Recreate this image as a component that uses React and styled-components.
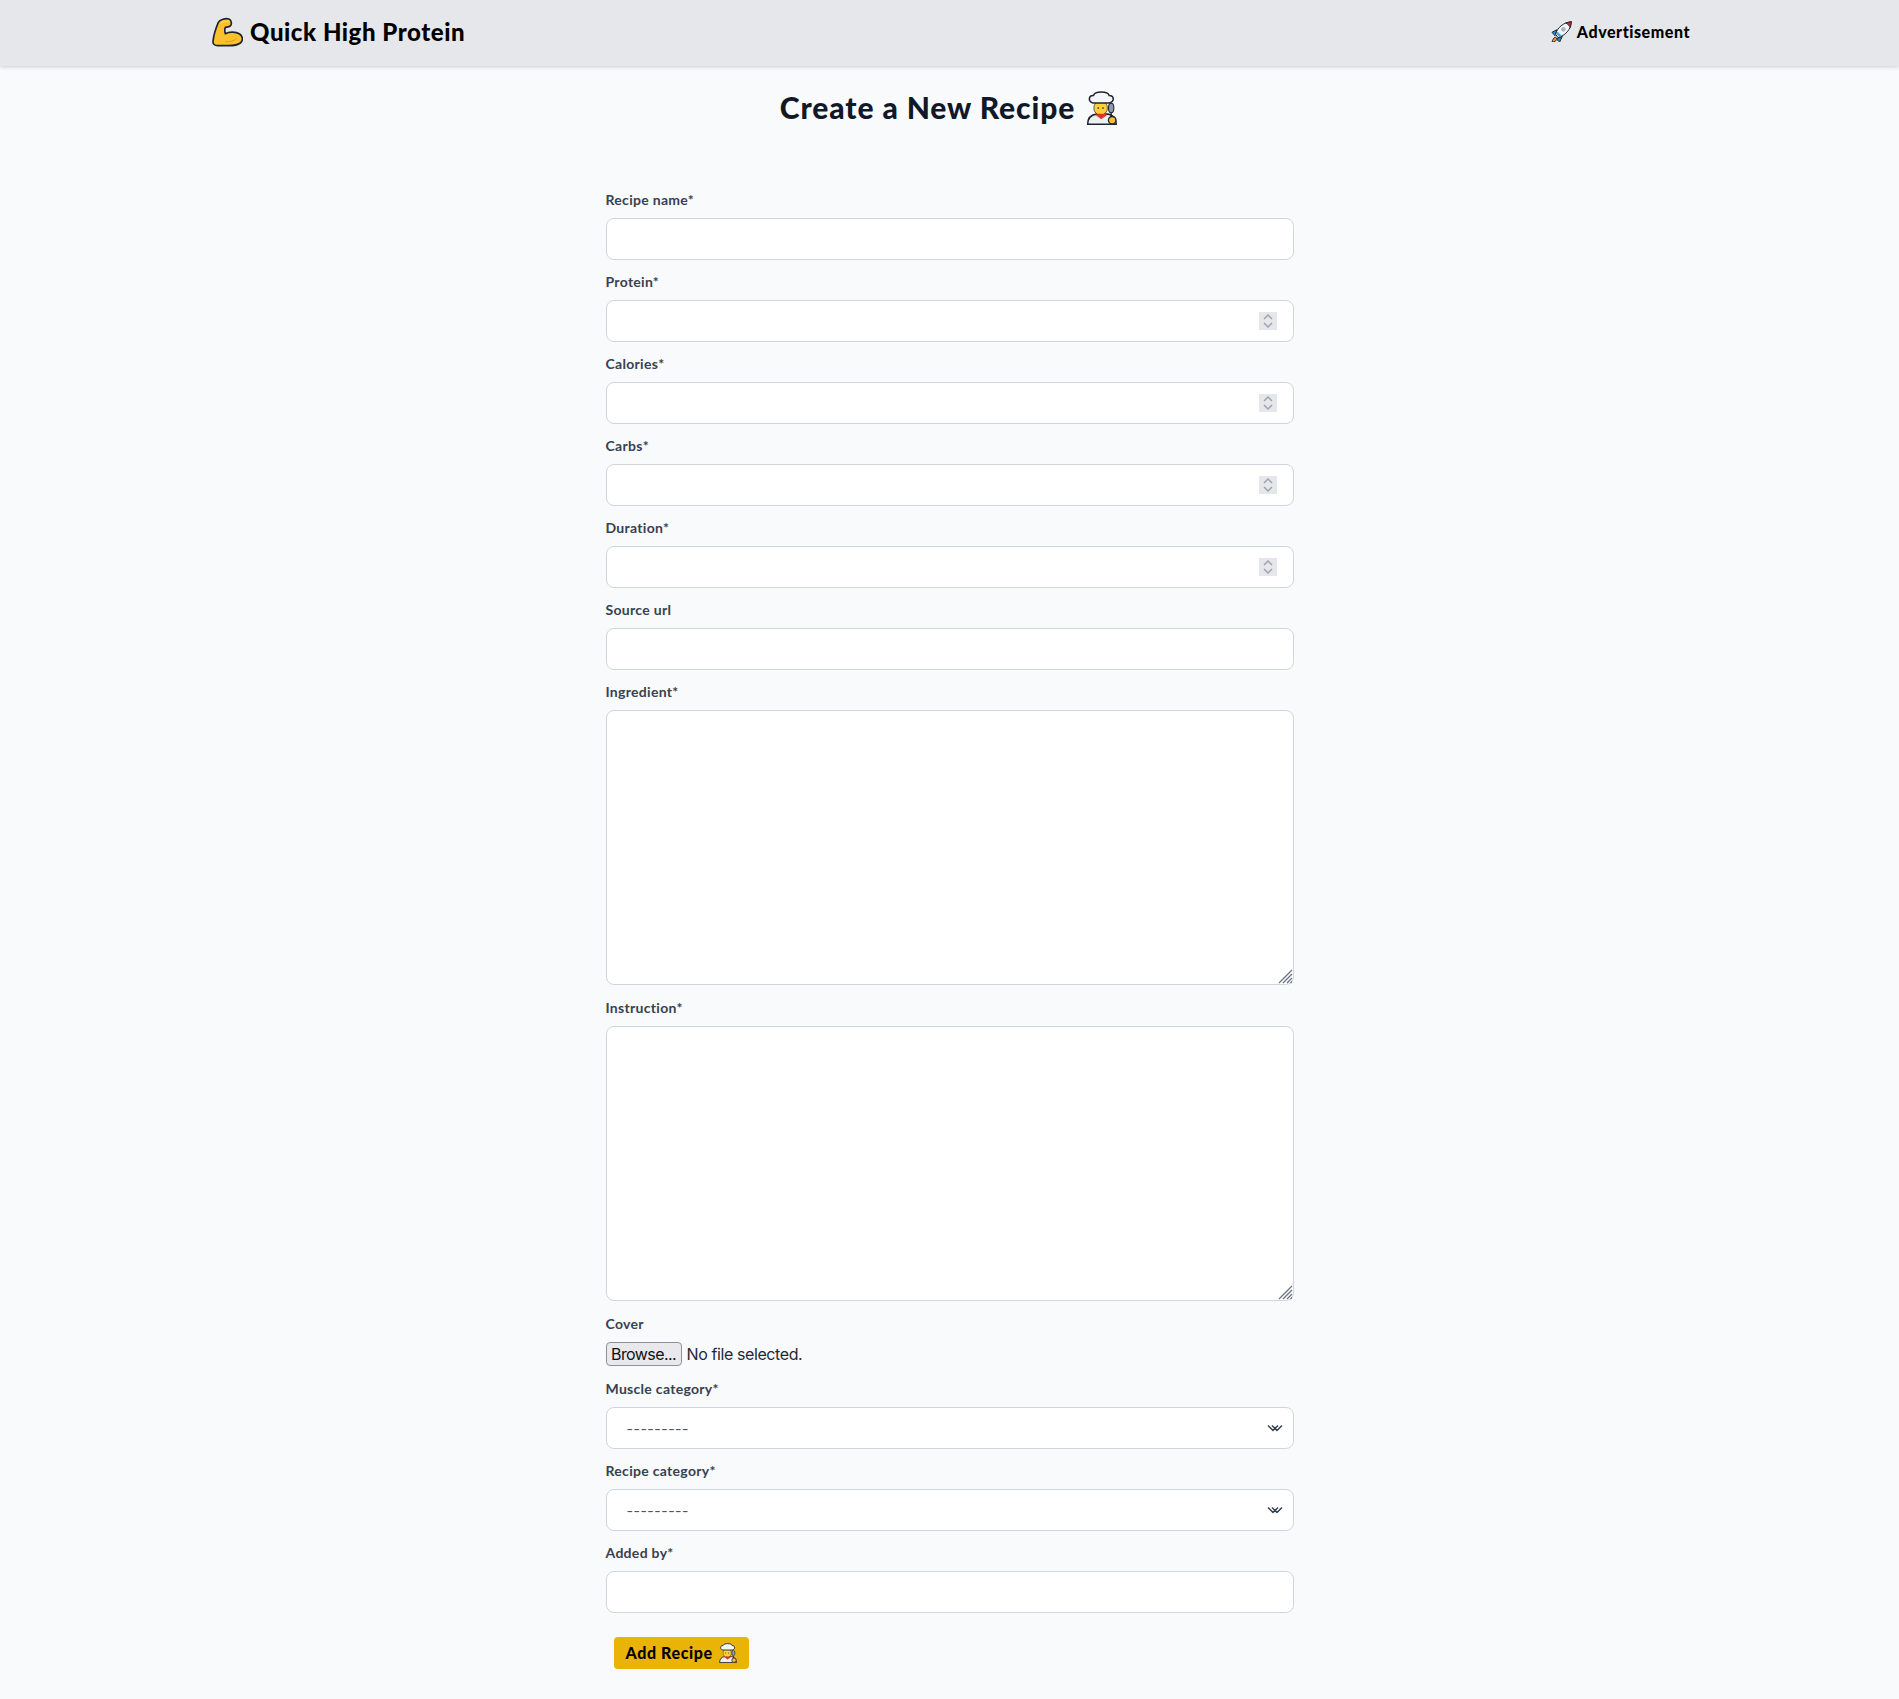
import styled, { createGlobalStyle } from 'styled-components';

const GlobalStyle = createGlobalStyle`
  * { box-sizing: border-box; }
  body {
    margin: 0;
    background: #f9fafb;
    font-family: "Lato", "Open Sans", sans-serif;
    color: #111827;
  }
`;

const Nav = styled.nav`
  height: 66px;
  background: #e5e7eb;
  box-shadow: 0 1px 4px rgba(0, 0, 0, 0.18);
  display: flex;
  align-items: center;
  justify-content: space-between;
  padding: 0 209px 3px 211px;
`;

const Brand = styled.a`
  display: flex;
  align-items: center;
  gap: 7px;
  font-size: 24px;
  font-weight: 900;
  letter-spacing: 0.55px;
  color: #000;
`;

const NavLink = styled.a`
  display: flex;
  align-items: center;
  gap: 5px;
  font-size: 16px;
  font-weight: 900;
  letter-spacing: 0.55px;
  color: #000;
`;

const Title = styled.h1`
  margin: 0;
  height: 124px;
  padding: 21px 0 63px;
  display: flex;
  justify-content: center;
  align-items: center;
  gap: 10px;
  font-size: 30px;
  line-height: 40px;
  font-weight: 900;
  letter-spacing: 0.9px;
  color: #111827;
`;

const TitleEmoji = styled.span`
  display: flex;
  align-self: flex-end;
  margin-bottom: 2px;
`;

const Form = styled.form`
  width: 688px;
  margin: 0 auto;
  padding-bottom: 32px;
`;

const Field = styled.div`
  margin-bottom: ${(p) => (p.$area ? '13px' : '12px')};
`;

const Label = styled.label`
  display: block;
  height: 24px;
  margin-bottom: 4px;
  font-size: 14px;
  line-height: 20px;
  font-weight: 700;
  letter-spacing: 0.3px;
  color: #374151;
`;

const Control = styled.div`
  position: relative;
`;

const Input = styled.input`
  display: block;
  width: 100%;
  height: 42px;
  background: #fff;
  border: 1px solid #d1d5db;
  border-radius: 8px;
  padding: 0 20px;
  font: inherit;
`;

const Textarea = styled.textarea`
  display: block;
  width: 100%;
  height: 275px;
  background: #fff;
  border: 1px solid #d1d5db;
  border-radius: 8px;
  padding: 10px 20px;
  font: inherit;
  resize: none;
`;

const Select = styled.select`
  display: block;
  width: 100%;
  height: 42px;
  appearance: none;
  background: #fff;
  border: 1px solid #d1d5db;
  border-radius: 8px;
  padding: 0 20px;
  font-family: "Inter", sans-serif;
  font-size: 14px;
  letter-spacing: 0.5px;
  color: #4b5563;
`;

const Spinner = styled.svg`
  position: absolute;
  top: 12px;
  right: 17px;
  width: 18px;
  height: 18px;
  background: #e5e7eb;
`;

const Grip = styled.svg`
  position: absolute;
  right: 1px;
  bottom: 1px;
  width: 15px;
  height: 15px;
`;

const Caret = styled.svg`
  position: absolute;
  top: 14px;
  right: 11px;
  width: 16px;
  height: 14px;
  pointer-events: none;
`;

const FileRow = styled.div`
  display: flex;
  align-items: center;
  gap: 5px;
  height: 24px;
  margin: 1px 0 13px;
  font-family: "Inter", sans-serif;
  font-size: 16px;
  letter-spacing: -0.4px;
  color: #1f2937;
`;

const BrowseButton = styled.button`
  width: 76px;
  height: 24px;
  padding: 0;
  background: #e9e9ed;
  border: 1px solid #8f8f9d;
  border-radius: 4px;
  font-family: "Inter", sans-serif;
  font-size: 16px;
  letter-spacing: -0.6px;
  color: #111;
`;

const Submit = styled.button`
  display: flex;
  align-items: center;
  gap: 5px;
  width: 135px;
  height: 32px;
  margin: 24px 0 0 8px;
  padding: 0 0 1px 12px;
  background: #eab308;
  border: 0;
  border-radius: 4px;
  font-family: "Lato", sans-serif;
  font-size: 16px;
  font-weight: 900;
  letter-spacing: 0.6px;
  color: #000;
`;

const Muscle = () => (
  <svg width="32" height="30" viewBox="8 12 96 90">
    <path
      d="M30 28C34 20 52 15 62 18c8 3 9 16 4 21-4 3-10 3-15 4-2 6-2 13 0 19 12-7 32-6 43 1 10 7 11 20 2 27-9 7-24 8-36 8H28c-9 0-15-5-14-13 1-12 8-38 16-57z"
      fill="#fbc02d"
      stroke="#1f2430"
      strokeWidth="5"
      strokeLinejoin="round"
    />
    <path d="M38 30c6-4 14-6 22-5" fill="none" stroke="#fde07a" strokeWidth="3" strokeLinecap="round" />
    <path d="M52 86c12 1 24-1 31-9" fill="none" stroke="#e39a13" strokeWidth="3" strokeLinecap="round" />
  </svg>
);

const Rocket = () => (
  <svg width="21" height="21" viewBox="18 14 63 63">
    <path d="M36 40 21 48l9 10zM52 60l-8 17-10-9z" fill="#1f8fd6" stroke="#1f2430" strokeWidth="3" strokeLinejoin="round" />
    <path d="M31 62c-5 3-9 9-10 16 7-1 13-5 16-10z" fill="#f59a23" stroke="#1f2430" strokeWidth="3" strokeLinejoin="round" />
    <path d="M32 54C36 34 56 18 79 16c-1 24-19 42-40 48z" fill="#f4f7fa" stroke="#1f2430" strokeWidth="3" strokeLinejoin="round" />
    <path d="M62 20l17-4-3 18c-3-6-8-11-14-14z" fill="#e0202f" stroke="#1f2430" strokeWidth="2.500" strokeLinejoin="round" />
    <path d="M34 52l9 10 7-4-12-12z" fill="#3ba7e6" />
    <circle cx="55" cy="39" r="7" fill="#a9b4bd" />
  </svg>
);

const Cook = ({ size }) => (
  <svg width={size} height={size} viewBox="14 12 96 100">
    <path d="M20 110C20 92 30 82 45 80h35c15 2 24 14 24 30z" fill="#eef1f3" stroke="#1f2430" strokeWidth="4.500" strokeLinejoin="round" />
    <ellipse cx="58" cy="62" rx="20" ry="21" fill="#fdd13a" stroke="#1f2430" strokeWidth="2" />
    <path d="M42 82l18 13 18-13-8-3H50z" fill="#e0352b" />
    <path d="M36 47C20 44 22 24 37 25c4-13 42-13 46 0 15-1 17 19 0 22z" fill="#f4f6f8" stroke="#1f2430" strokeWidth="4.500" strokeLinejoin="round" />
    <circle cx="51" cy="62" r="2.500" fill="#1f2430" />
    <circle cx="65" cy="62" r="2.500" fill="#1f2430" />
    <ellipse cx="89" cy="62" rx="8" ry="14" fill="#8d99a3" stroke="#1f2430" strokeWidth="3" />
    <path d="M89 76v14" stroke="#1f2430" strokeWidth="4" />
    <circle cx="92" cy="98" r="11" fill="#fbc02d" stroke="#1f2430" strokeWidth="4" />
  </svg>
);

const NumberField = ({ label }) => (
  <Field>
    <Label>{label}</Label>
    <Control>
      <Input type="text" inputMode="numeric" />
      <Spinner viewBox="0 0 18 18">
        <path d="M5 7 9 3l4 4M5 11l4 4 4-4" fill="none" stroke="#9ca3af" strokeWidth="1.500" />
      </Spinner>
    </Control>
  </Field>
);

const TextField = ({ label }) => (
  <Field>
    <Label>{label}</Label>
    <Input type="text" />
  </Field>
);

const AreaField = ({ label }) => (
  <Field $area>
    <Label>{label}</Label>
    <Control>
      <Textarea />
      <Grip viewBox="0 0 15 15">
        <path d="M1 14 14 1M5 14 14 5M9 14l5-5M12.500 14l1.500-1.500" stroke="#6b7280" strokeWidth="1.300" fill="none" />
      </Grip>
    </Control>
  </Field>
);

const SelectField = ({ label }) => (
  <Field>
    <Label>{label}</Label>
    <Control>
      <Select defaultValue="">
        <option value="">---------</option>
      </Select>
      <Caret viewBox="0 0 16 14">
        <path d="M1 4.500 6 9.500 11 4.500M5 4.500 10 9.500 15 4.500" fill="none" stroke="#374151" strokeWidth="1.500" />
      </Caret>
    </Control>
  </Field>
);

const App = () => (
  <>
    <GlobalStyle />
    <Nav>
      <Brand>
        <Muscle />
        Quick High Protein
      </Brand>
      <NavLink>
        <Rocket />
        Advertisement
      </NavLink>
    </Nav>
    <Title>
      Create a New Recipe
      <TitleEmoji>
        <Cook size={34} />
      </TitleEmoji>
    </Title>
    <Form>
      <TextField label="Recipe name*" />
      <NumberField label="Protein*" />
      <NumberField label="Calories*" />
      <NumberField label="Carbs*" />
      <NumberField label="Duration*" />
      <TextField label="Source url" />
      <AreaField label="Ingredient*" />
      <AreaField label="Instruction*" />
      <div>
        <Label>Cover</Label>
        <FileRow>
          <BrowseButton type="button">Browse...</BrowseButton>
          No file selected.
        </FileRow>
      </div>
      <SelectField label="Muscle category*" />
      <SelectField label="Recipe category*" />
      <TextField label="Added by*" />
      <Submit type="button">
        Add Recipe
        <Cook size={20} />
      </Submit>
    </Form>
  </>
);

export default App;
